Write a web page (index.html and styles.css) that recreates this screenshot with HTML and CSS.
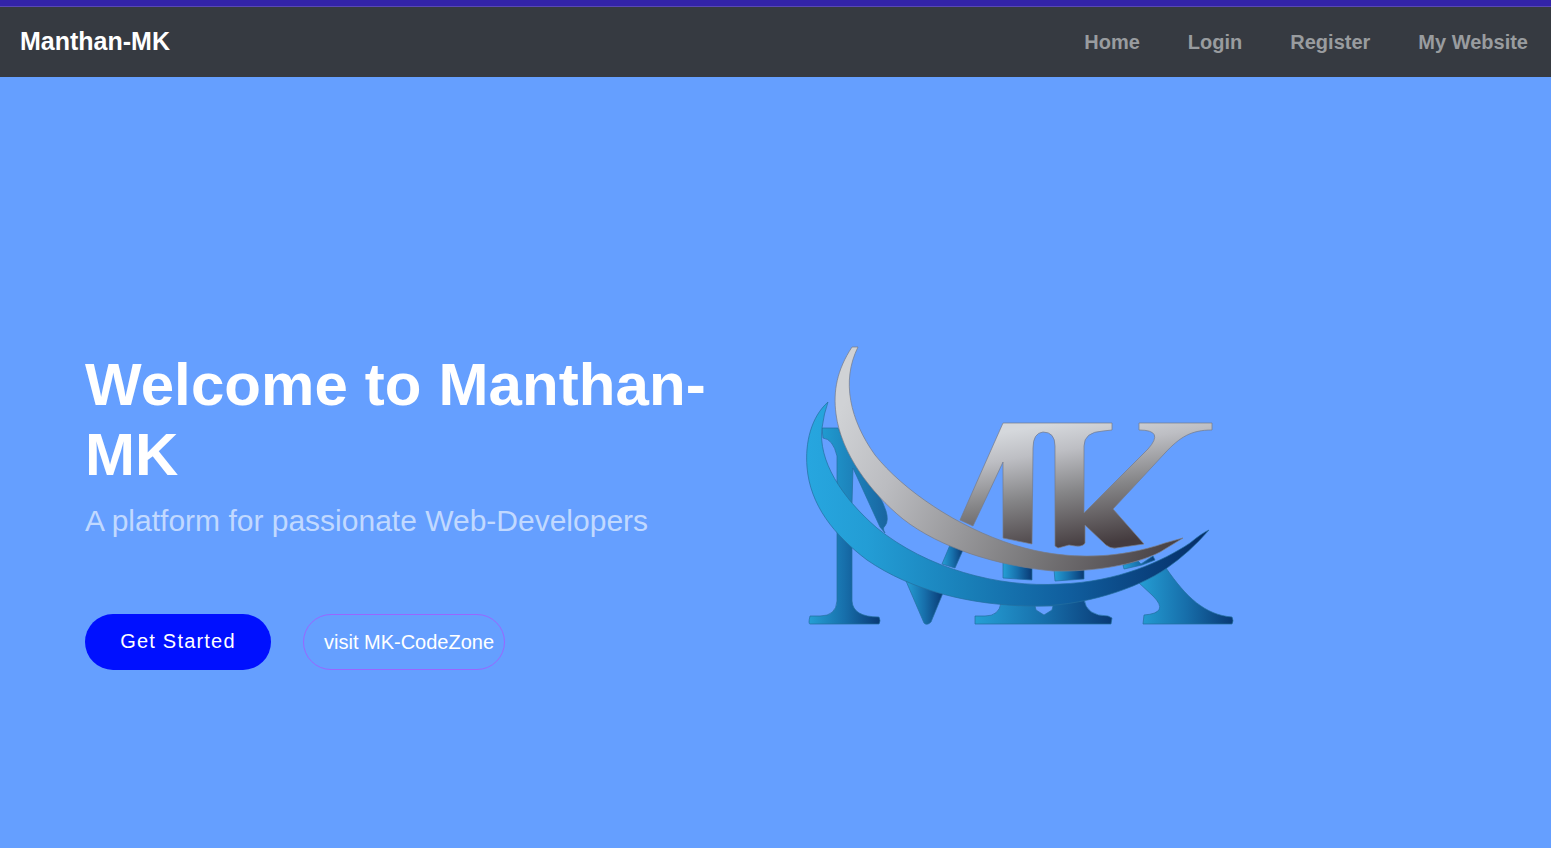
FILE: index.html
```html
<!DOCTYPE html>
<html lang="en">
<head>
<meta charset="utf-8">
<title>Manthan-MK</title>
<link rel="stylesheet" href="styles.css">
</head>
<body>
<header class="navbar">
  <a class="brand">Manthan-MK</a>
  <nav class="links"><a>Home</a><a>Login</a><a>Register</a><a>My Website</a></nav>
</header>
<main class="hero">
  <section class="intro">
    <h1>Welcome to Manthan-MK</h1>
    <p class="tagline">A platform for passionate Web-Developers</p>
    <div class="actions">
      <a class="btn primary">Get Started</a>
      <a class="btn outline">visit MK-CodeZone</a>
    </div>
  </section>
  <svg class="logo" viewBox="800 340 440 290" role="img" aria-label="MK logo">
    <defs>
      <linearGradient id="steel" gradientUnits="userSpaceOnUse" x1="1060" y1="423" x2="1080" y2="548">
        <stop offset="0" stop-color="#d5d8dc"/><stop offset=".22" stop-color="#bdbec3"/><stop offset=".55" stop-color="#858587"/><stop offset="1" stop-color="#443b3e"/>
      </linearGradient>
      <linearGradient id="arc" gradientUnits="userSpaceOnUse" x1="845" y1="400" x2="1180" y2="555">
        <stop offset="0" stop-color="#d0d2d5"/><stop offset=".2" stop-color="#bbbcc0"/><stop offset=".65" stop-color="#777678"/><stop offset="1" stop-color="#443d41"/>
      </linearGradient>
      <linearGradient id="wave" gradientUnits="userSpaceOnUse" x1="807" y1="0" x2="1209" y2="0">
        <stop offset="0" stop-color="#27a6df"/><stop offset=".15" stop-color="#239dd5"/><stop offset=".4" stop-color="#197fb8"/><stop offset=".65" stop-color="#105e9e"/><stop offset="1" stop-color="#052c66"/>
      </linearGradient>
      <linearGradient id="sea"><stop offset="0" stop-color="#259fd5"/><stop offset=".5" stop-color="#176fab"/><stop offset="1" stop-color="#093974"/></linearGradient>
      <linearGradient id="stem"><stop offset="0" stop-color="#209bd0"/><stop offset="1" stop-color="#1965a1"/></linearGradient>
    </defs>
    <g class="blue-parts">
      <path fill="url(#stem)" d="M822 428H838L846 446L862 471L872 486Q881 496 886 511Q889 521 885 526Q882 528 885 533L880 527L853 468L852 503Q843 496 837 486V456Q833 439 823 438Z"/>
      <path fill="url(#sea)" d="M837 531V601Q836 616 820 616H810Q808 624 810 624H879Q881 621 879 617Q853 617 852 601V547Z"/>
      <path fill="url(#sea)" d="M906 581L924 623Q927 626 931 622L943 593Z"/>
      <path fill="url(#sea)" d="M950 545L963 550L955 568L942 564Z"/>
      <path fill="url(#sea)" d="M1003 561L1032 567V580L1003 578Z"/>
      <path fill="url(#sea)" d="M1054 569H1084V579L1055 581Z"/>
      <path fill="url(#sea)" fill-rule="evenodd" d="M1001 603Q999 616 985 616H975V624H1111L1112 618L1108 616Q1086 616 1084 599ZM1035 606H1053L1052 610L1044 615L1036 610Z"/>
      <path fill="url(#sea)" d="M1138 582L1166 568C1186 597 1205 615 1232 617Q1234 621 1232 624H1143L1144 615Q1170 613 1153 596Z"/>
      <path fill="url(#wave)" d="M828 402C811 417 805 443 807 467C810 505 834 535 867 560C912 591 971 605 1030 606C1081 607 1137 589 1167 568Q1190 552 1209 530Q1202 533 1190 543C1163 561 1118 582 1060 584C998 588 926 568 877 528C841 497 818 460 822 428Q824 413 828 402Z"/>
      <path fill="url(#sea)" d="M1123 565L1138 561L1141 564L1153 556L1155 560L1142 565L1124 569Z"/>
    </g>
    <g class="steel-parts">
      <path fill="url(#arc)" d="M852 347C837 370 833 391 836 414C841 453 870 492 903 519C940 548 998 566 1053 571C1093 572 1135 565 1160 552L1183 538L1165 543C1122 558 1069 562 1014 545C957 527 903 490 875 455C850 420 841 381 858 347Z"/>
      <path fill="url(#steel)" d="M1003 423H1112V430L1103 431Q1084 432 1084 446V513L1148 449Q1165 430 1139 430V423H1212V430C1191 430 1180 437 1165 453L1113 509L1144 544L1116 548Q1111 549 1106 545L1085 525V543Q1083 548 1069 545L1058 548L1055 546V446Q1055 432 1043 432Q1033 433 1033 448L1032 544L1003 538V462L973 526L960 520Z"/>
    </g>
  </svg>
</main>
</body>
</html>
```
FILE: styles.css
```css
* { box-sizing: border-box; }
body { margin: 0; height: 848px; display: flex; flex-direction: column; overflow: hidden; background: #659fff; color: #fff; font-family: "Liberation Sans", Arial, sans-serif; }
.navbar { height: 77px; flex: none; display: flex; align-items: center; justify-content: space-between; padding: 0 23px 0 20px; background: #363a41; border-top: 6px solid #3323a8; box-shadow: inset 0 1px #5947b5; font-weight: bold; }
.brand { font-size: 25px; }
.links { display: flex; gap: 48px; padding-top: 2px; font-size: 20px; color: #999c9f; }
.hero { flex: 1; display: flex; align-items: flex-start; padding: 263px 0 0 85px; }
.intro { width: 715px; flex: none; padding-top: 10px; }
h1 { width: 660px; margin: 0; font-size: 60px; line-height: 70px; letter-spacing: 0.1px; }
.tagline { margin: 13px 0 0; font-size: 30px; line-height: 36px; color: #c1d9ff; }
.actions { display: flex; gap: 32px; margin-top: 75px; }
.btn { height: 56px; border-radius: 28px; font-size: 20px; line-height: 56px; white-space: nowrap; }
.primary { width: 186px; text-align: center; background: #0010ff; letter-spacing: 1.2px; line-height: 54px; }
.outline { width: 202px; border: 1px solid #9966ff; padding-left: 20px; line-height: 55px; }
.logo { width: 440px; height: 290px; flex: none; }
.blue-parts { stroke: #246f9f; stroke-width: .7; }
.steel-parts { stroke: #777b86; stroke-width: .7; }
```
